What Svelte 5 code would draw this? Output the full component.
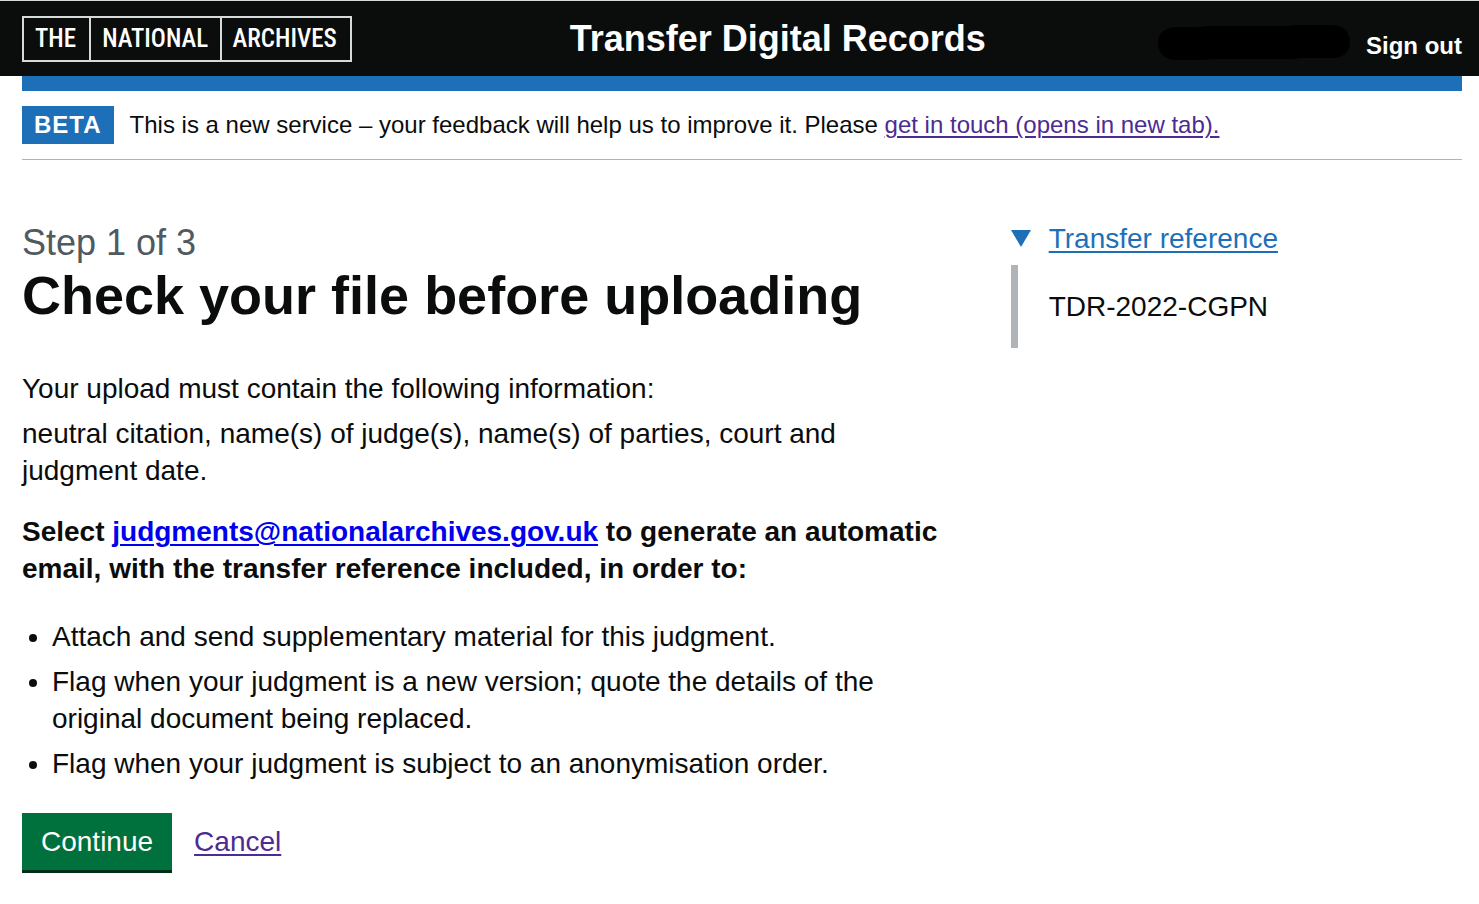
<script>
  const requirements = [
    'Attach and send supplementary material for this judgment.',
    'Flag when your judgment is a new version; quote the details of the original document being replaced.',
    'Flag when your judgment is subject to an anonymisation order.'
  ];
</script>

<header class="header">
  <a class="logo" href="#home">
    <span>THE</span><span>NATIONAL</span><span>ARCHIVES</span>
  </a>
  <a class="service" href="#service">Transfer Digital Records</a>
  <div class="account">
    <svg class="user" viewBox="0 0 194 36" aria-hidden="true">
      <path d="M18 2 Q1 4 1 18 Q2 34 18 35 L45 35 L55 34 L135 34 L145 33 L177 33 Q193 31 193 17 Q192 1 176 0 L140 0 L130 1 L50 1 L42 2 Z" fill="#000" />
    </svg>
    <a href="#signout">Sign out</a>
  </div>
</header>

<div class="container">
  <div class="bar"></div>
  <div class="phase">
    <strong class="tag">BETA</strong>
    <span>This is a new service – your feedback will help us to improve it. Please <a class="visited" href="#feedback">get in touch (opens in new tab).</a></span>
  </div>

  <main class="grid">
    <div class="content">
      <span class="caption">Step 1 of 3</span>
      <h1>Check your file before uploading</h1>
      <p class="intro">Your upload must contain the following information:</p>
      <p class="fields">neutral citation, name(s) of judge(s), name(s) of parties, court and judgment date.</p>
      <p class="lead">Select <a href="#email">judgments@nationalarchives.gov.uk</a> to generate an automatic email, with the transfer reference included, in order to:</p>
      <ul>
        {#each requirements as item}
          <li>{item}</li>
        {/each}
      </ul>
      <div class="actions">
        <button type="button">Continue</button>
        <a class="visited" href="#cancel">Cancel</a>
      </div>
    </div>
    <details open>
      <summary>
        <svg viewBox="0 0 20 18" aria-hidden="true"><path d="M0 0H20L10 17Z" fill="#1d70b8" /></svg>
        <span>Transfer reference</span>
      </summary>
      <div class="reference">TDR-2022-CGPN</div>
    </details>
  </main>
</div>

<style>
  :global(body) {
    background: #fff;
    color: #0b0c0c;
    font-family: "Liberation Sans", Arial, sans-serif;
    font-size: 28px;
    line-height: 37px;
  }
  .header {
    display: grid;
    grid-template-columns: 23fr auto 20fr;
    align-items: start;
    padding: 15px 17px 12px 22px;
    background: #0b0c0c;
    border-top: 1px solid #d5dbd9;
  }
  .header a {
    color: #fff;
    text-decoration: none;
  }
  .header .logo {
    display: grid;
    grid-template-columns: 1fr 2fr 2fr;
    justify-self: start;
    width: 330px;
    box-sizing: border-box;
    border: 2px solid #d5dbd9;
    font-family: "Roboto Condensed", Roboto, sans-serif;
    font-size: 25px;
    font-weight: 500;
    line-height: 42px;
  }
  .logo span {
    padding-left: 11px;
  }
  .logo span + span {
    border-left: 2px solid #d5dbd9;
  }
  .service {
    font-size: 36px;
    font-weight: 700;
    line-height: 46px;
  }
  .account {
    display: flex;
    justify-self: end;
    align-items: start;
    gap: 15px;
    font-size: 24px;
    font-weight: 700;
  }
  .account a {
    padding-top: 11px;
  }
  .user {
    width: 194px;
    height: 36px;
    padding-top: 9px;
  }
  .container {
    padding: 0 17px 0 22px;
  }
  .bar {
    height: 15px;
    background: #1d70b8;
  }
  .phase {
    display: flex;
    align-items: center;
    gap: 16px;
    padding: 15px 0;
    border-bottom: 1px solid #b1b4b6;
    font-size: 24px;
    line-height: 38px;
  }
  .tag {
    padding: 0 12px;
    background: #1d70b8;
    color: #fff;
    letter-spacing: 1px;
  }
  a {
    text-decoration-thickness: 2px;
    text-underline-offset: 3px;
  }
  .visited {
    color: #4c2c92;
  }
  .grid {
    display: grid;
    grid-template-columns: minmax(0, 23fr) minmax(0, 11fr);
    gap: 45px;
    padding-top: 60px;
  }
  .caption {
    display: block;
    color: #505a5f;
    font-size: 36px;
    line-height: 45px;
  }
  h1 {
    margin: 0 0 45px;
    font-size: 54px;
    line-height: 60px;
  }
  p {
    margin: 0;
  }
  .intro {
    margin-bottom: 8px;
  }
  .fields {
    max-width: 900px;
    margin-bottom: 24px;
  }
  .lead {
    margin-bottom: 31px;
    font-weight: 700;
  }
  .lead a {
    color: #00e;
  }
  ul {
    margin: 0 0 31px;
    padding-left: 30px;
  }
  li + li {
    margin-top: 8px;
  }
  .actions {
    display: flex;
    align-items: baseline;
    gap: 22px;
  }
  button {
    padding: 10px 19px;
    border: 0;
    border-bottom: 3px solid #002d18;
    background: #00703c;
    color: #fff;
    font: inherit;
  }
  summary {
    display: flex;
    align-items: center;
    gap: 18px;
    color: #1d70b8;
    list-style: none;
    cursor: pointer;
  }
  summary svg {
    width: 20px;
    height: 18px;
  }
  summary span {
    text-decoration: underline 2px;
    text-underline-offset: 3px;
  }
  .reference {
    margin-top: 8px;
    padding: 23px 31px;
    border-left: 7px solid #b1b4b6;
  }
</style>
